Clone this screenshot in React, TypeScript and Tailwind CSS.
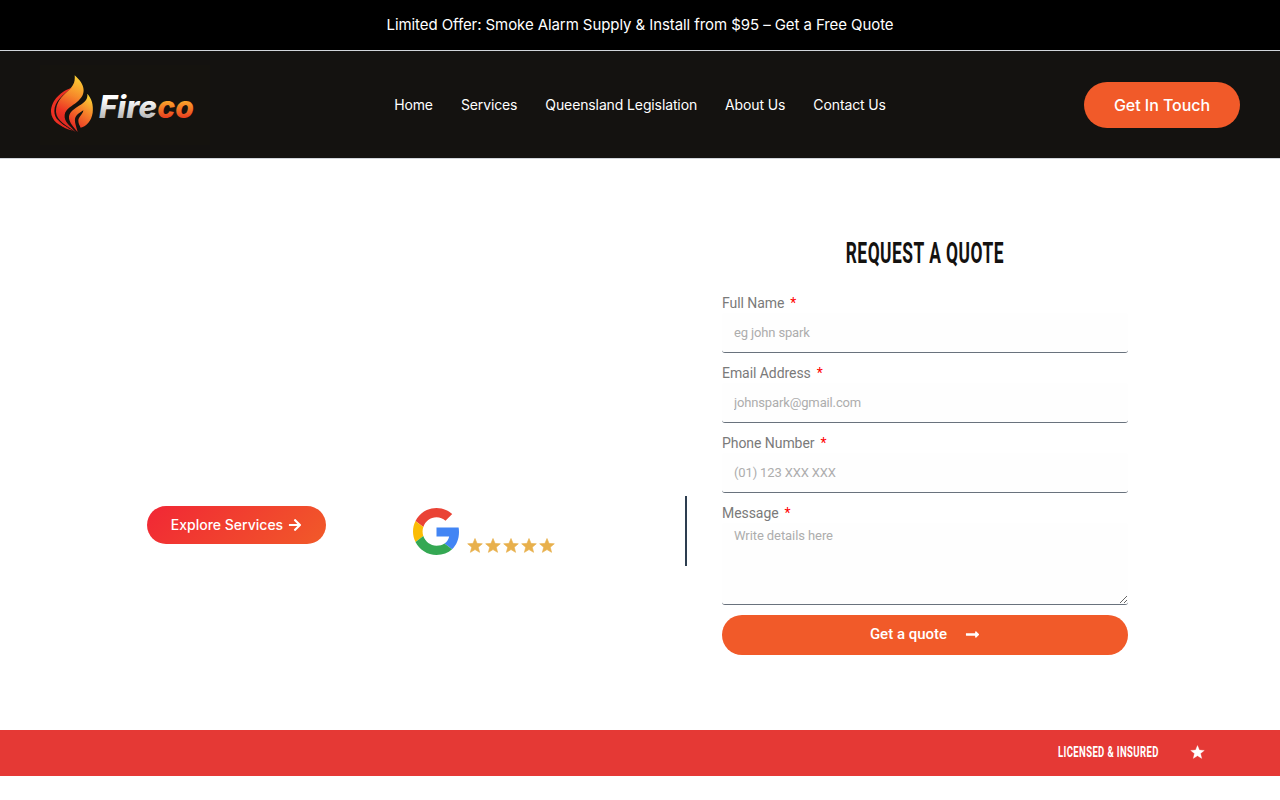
import React from "react";
import { FaArrowRight, FaLongArrowAltRight } from "react-icons/fa";

const NAV_LINKS = [
  "Home",
  "Services",
  "Queensland Legislation",
  "About Us",
  "Contact Us",
];

interface Field {
  id: string;
  label: string;
  type: string;
  placeholder: string;
}

const FIELDS: Field[] = [
  { id: "name", label: "Full Name", type: "text", placeholder: "eg john spark" },
  { id: "email", label: "Email Address", type: "email", placeholder: "johnspark@gmail.com" },
  { id: "phone", label: "Phone Number", type: "tel", placeholder: "(01) 123 XXX XXX" },
];

const Logo: React.FC = () => (
  <svg viewBox="30 45 510 240" className="w-[170px] h-20 bg-[#15130f]" aria-label="Fireco">
    <defs>
      <linearGradient id="flame" gradientUnits="userSpaceOnUse" x1="155" y1="85" x2="100" y2="205">
        <stop offset="0" stopColor="#fbcf34" />
        <stop offset="0.45" stopColor="#f6872a" />
        <stop offset="0.85" stopColor="#ee3424" />
        <stop offset="1" stopColor="#e02a22" />
      </linearGradient>
      <linearGradient id="spark" gradientUnits="userSpaceOnUse" x1="185" y1="145" x2="125" y2="225">
        <stop offset="0" stopColor="#fbcf34" />
        <stop offset="0.45" stopColor="#f6822a" />
        <stop offset="1" stopColor="#e83024" />
      </linearGradient>
      <linearGradient id="steel" x1="0" y1="0" x2="0" y2="1">
        <stop offset="0.3" stopColor="#ffffff" />
        <stop offset="0.8" stopColor="#b9b9b9" />
      </linearGradient>
      <linearGradient id="ember" x1="0" y1="0" x2="0" y2="1">
        <stop offset="0.35" stopColor="#f9a62b" />
        <stop offset="0.8" stopColor="#e8401f" />
      </linearGradient>
    </defs>
    {/* main tongue */}
    <path
      fill="url(#flame)"
      d="M134 76C136 98 129 109 114 122C95 139 77 158 78 186C80 213 110 226 138 247C122 228 101 216 104 194C107 176 127 168 141 156C172 132 165 103 134 76Z"
    />
    {/* right tongue */}
    <path
      fill="url(#spark)"
      d="M172 131C174 150 162 158 147 167C124 181 113 193 118 210C122 224 134 235 143 246C137 222 130 209 139 197C145 189 153 187 160 181C159 193 145 201 145 212C145 220 149 226 152 233C170 228 184 213 188 188C191 163 184 144 172 131Z"
    />
    {/* left edges */}
    <path
      fill="#ec3023"
      d="M125 114C96 121 63 151 63 185C64 211 88 230 116 234C90 220 73 206 73 183C74 154 98 135 125 114Z"
    />
    <path fill="#e52a22" d="M82 207C91 221 110 233 130 242C108 238 87 228 82 207Z" />
    <text
      x="207"
      y="204"
      fontFamily="Inter"
      fontSize="92"
      fontWeight="800"
      fontStyle="italic"
      textLength="174"
      lengthAdjust="spacingAndGlyphs"
      fill="url(#steel)"
    >
      Fire
    </text>
    <text
      x="382"
      y="204"
      fontFamily="Inter"
      fontSize="92"
      fontWeight="800"
      fontStyle="italic"
      textLength="110"
      lengthAdjust="spacingAndGlyphs"
      fill="url(#ember)"
    >
      co
    </text>
  </svg>
);

const GoogleLogo: React.FC = () => (
  <svg viewBox="0 0 48 48" className="w-[47px] h-[47px]">
    <path fill="#ea4335" d="M24 9.5c3.54 0 6.71 1.22 9.21 3.6l6.85-6.85C35.9 2.38 30.47 0 24 0 14.62 0 6.51 5.38 2.56 13.22l7.98 6.19C12.43 13.72 17.74 9.5 24 9.5z" />
    <path fill="#4285f4" d="M46.98 24.55c0-1.57-.15-3.09-.38-4.55H24v9.02h12.94c-.58 2.96-2.26 5.48-4.78 7.18l7.73 6c4.51-4.18 7.09-10.36 7.09-17.65z" />
    <path fill="#fbbc05" d="M10.53 28.59c-.48-1.45-.76-2.99-.76-4.59s.27-3.14.76-4.59l-7.98-6.19C.92 16.46 0 20.12 0 24c0 3.88.92 7.54 2.56 10.78l7.97-6.19z" />
    <path fill="#34a853" d="M24 48c6.48 0 11.93-2.13 15.89-5.81l-7.73-6c-2.15 1.45-4.92 2.3-8.16 2.3-6.26 0-11.57-4.22-13.47-9.91l-7.98 6.19C6.51 42.62 14.62 48 24 48z" />
  </svg>
);

const Star: React.FC<{ className: string }> = ({ className }) => (
  <svg viewBox="0 0 24 23" className={className} fill="currentColor" stroke="currentColor" strokeLinejoin="round">
    <path d="M12 .8l3.1 7.5 8.1.6-6.2 5.2 2 7.9-7-4.3L5 22l2-7.9L.8 8.9l8.1-.6z" />
  </svg>
);

const FieldLabel: React.FC<{ htmlFor: string; text: string }> = ({ htmlFor, text }) => (
  <label
    htmlFor={htmlFor}
    className="flex h-[21px] items-center gap-1.5 text-sm tracking-[-0.06px] text-[#7a7a7a]"
  >
    {text} <span className="text-[#ff0000]">*</span>
  </label>
);

const QuoteForm: React.FC = () => (
  <form className="w-[406px] font-['Roboto',sans-serif]">
    <h2 className="flex h-[30px] items-center justify-center pt-0.5 text-[29px] leading-[30px] font-bold text-[#141210] whitespace-nowrap">
      <span className="inline-block scale-x-[0.6] tracking-[0.8px]">REQUEST A QUOTE</span>
    </h2>

    <div className="mt-[25px] flex flex-col gap-[9px]">
      {FIELDS.map((field) => (
        <div key={field.id} className="h-[61px]">
          <FieldLabel htmlFor={field.id} text={field.label} />
          <input
            id={field.id}
            type={field.type}
            placeholder={field.placeholder}
            className="block w-full h-10 px-3 text-[13px] tracking-[-0.14px] rounded-[3px] border-b border-[#69727d] bg-[#fefefe] placeholder:text-[#adadad] outline-none"
          />
        </div>
      ))}
      <div>
        <FieldLabel htmlFor="message" text="Message" />
        <textarea
          id="message"
          placeholder="Write details here"
          className="block w-full h-[82px] px-3 py-1 text-[13px] leading-[18px] tracking-[-0.08px] rounded-[3px] border-b border-[#69727d] bg-[#fefefe] placeholder:text-[#adadad] resize-y outline-none"
        />
      </div>
    </div>

    <button
      type="button"
      className="mt-2.5 flex w-full h-10 items-center justify-center gap-[18px] rounded-[20px] bg-[#f15a29] pb-px text-[15px] font-medium text-white"
    >
      Get a quote
      <FaLongArrowAltRight className="w-[15px] h-[15px]" />
    </button>
  </form>
);

export default function App() {
  return (
    <div className="w-full h-[800px] overflow-hidden bg-white font-['Inter',sans-serif]">
      <div className="flex h-[51px] items-center justify-center border-b border-[#d1d5db] bg-black text-[15px] tracking-[-0.08px] text-white">
        Limited Offer: Smoke Alarm Supply &amp; Install from $95 – Get a Free Quote
      </div>

      <header className="flex h-[108px] items-center justify-between border-b border-[#d1d5db] bg-[#141210] px-10">
        <div className="flex-1">
          <Logo />
        </div>
        <nav className="flex gap-7 text-sm tracking-[-0.12px] text-white">
          {NAV_LINKS.map((link) => (
            <a key={link} href="#">
              {link}
            </a>
          ))}
        </nav>
        <div className="flex flex-1 justify-end">
          <a
            href="#"
            className="flex w-[156px] h-[46px] items-center justify-center rounded-[23px] bg-[#f15a29] text-base tracking-[-0.05px] font-medium text-white"
          >
            Get In Touch
          </a>
        </div>
      </header>

      <main className="flex h-[571px]">
        <div className="flex w-[687px] items-start pt-[337px] pl-[147px]">
          <a
            href="#"
            className="mt-[10px] flex w-[179px] h-[38px] shrink-0 items-center justify-center gap-[5px] rounded-[19px] bg-linear-[135deg,#f12735,#f15a29] text-sm font-medium text-white"
          >
            Explore Services
            <FaArrowRight className="w-3.5 h-3.5" />
          </a>
          <div className="ml-[86.5px] mt-[11.5px] flex items-end gap-[7.5px]">
            <GoogleLogo />
            <div className="flex gap-0.5 pb-[1.5px] text-[#e8b04c]">
              {[1, 2, 3, 4, 5].map((star) => (
                <Star key={star} className="w-4 h-[15px] stroke-1" />
              ))}
            </div>
          </div>
          <div className="ml-auto w-0.5 h-[70px] bg-[#2d3e50]" />
        </div>
        <div className="pt-[78px] pl-[35px]">
          <QuoteForm />
        </div>
      </main>

      <div className="flex h-[46px] items-center justify-end bg-[#e53935] pr-[75px] pb-0.5 text-white">
        <span className="flex w-[101px] justify-center pt-px font-['Roboto',sans-serif] text-[15px] leading-none font-bold whitespace-nowrap">
          <span className="inline-block scale-x-[0.635] tracking-[0.6px]">LICENSED &amp; INSURED</span>
        </span>
        <Star className="ml-[31px] w-[15px] h-3.5 stroke-[0.5]" />
      </div>
    </div>
  );
}
